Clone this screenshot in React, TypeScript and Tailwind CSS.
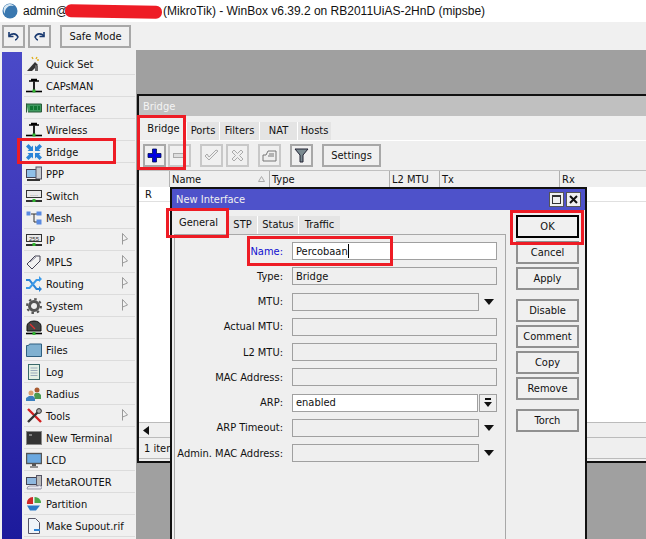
import React from 'react'

const FONT = { fontFamily: '"DejaVu Sans Condensed", "Liberation Sans", Tahoma, sans-serif' }

type MenuItem = { label: string; icon: React.ReactNode; more?: boolean }

const Antenna = () => (
  <svg width="16" height="16" viewBox="0 0 16 16">
    <path d="M3 3h10M5 1.500h6" stroke="#000" strokeWidth="1.400" />
    <path d="M8 3v9" stroke="#222" strokeWidth="2" />
    <path d="M0 13.500h16" stroke="#000" strokeWidth="1.600" />
    <rect x="6.500" y="11.500" width="3" height="3" fill="#2fb52f" />
  </svg>
)

const NetBox = ({ text }: { text: string }) => (
  <svg width="16" height="16" viewBox="0 0 16 16">
    <rect x="0.500" y="2.500" width="15" height="7" fill="#e8e8e8" stroke="#333" />
    <text x="8" y="8.500" fontSize="6" textAnchor="middle" fill="#333" fontFamily="Liberation Sans">{text}</text>
    <path d="M0 13h16" stroke="#000" strokeWidth="1.600" />
    <rect x="6.500" y="11" width="3" height="3" fill="#2fb52f" />
  </svg>
)

const menu: MenuItem[] = [
  {
    label: 'Quick Set',
    icon: (
      <svg width="16" height="16" viewBox="0 0 16 16">
        <path d="M1 15 L9 6 L12 9 L6 15Z" fill="#333" />
        <path d="M9 15V9l3 1v5z" fill="#666" />
        <path d="M6 1l1 2M11 1l-1 2M13 4h-2" stroke="#e0b020" strokeWidth="1.400" />
      </svg>
    ),
  },
  { label: 'CAPsMAN', icon: <Antenna /> },
  {
    label: 'Interfaces',
    icon: (
      <svg width="16" height="16" viewBox="0 0 16 16">
        <path d="M0.500 3.500v9M0.500 4h15v8H2" fill="#3f9a5f" stroke="#2a5a3a" />
        <rect x="4" y="6" width="3" height="4" fill="#173" />
        <rect x="8" y="6" width="3" height="4" fill="#173" />
        <rect x="12" y="6" width="2" height="4" fill="#173" />
      </svg>
    ),
  },
  { label: 'Wireless', icon: <Antenna /> },
  {
    label: 'Bridge',
    icon: (
      <svg width="16" height="16" viewBox="0 0 16 16">
        <path d="M7 7H1.500L3 5.500 0 2.500 2.500 0l3 3L7 1.500z" fill="#2a84d8" />
        <path d="M9 7h5.500L13 5.500l3-3L13.500 0l-3 3L9 1.500z" fill="#2a84d8" />
        <path d="M7 9H1.500L3 10.500l-3 3L2.500 16l3-3L7 14.500z" fill="#2a84d8" />
        <path d="M9 9h5.500L13 10.500l3 3-2.500 2.500-3-3L9 14.500z" fill="#2a84d8" />
      </svg>
    ),
  },
  {
    label: 'PPP',
    icon: (
      <svg width="16" height="16" viewBox="0 0 16 16">
        <rect x="0.500" y="3.500" width="10" height="8" fill="#8fc0e8" stroke="#445" />
        <rect x="10" y="1" width="5.500" height="12" fill="#c8ccd0" stroke="#556" />
        <path d="M1 14h13" stroke="#333" strokeWidth="2" />
      </svg>
    ),
  },
  { label: 'Switch', icon: <NetBox text="····" /> },
  {
    label: 'Mesh',
    icon: (
      <svg width="16" height="16" viewBox="0 0 16 16">
        <path d="M5 4h6M8 4v8h3" stroke="#333" fill="none" />
        <rect x="0.500" y="1.500" width="4" height="4" fill="#5a8ae0" />
        <rect x="10.500" y="1.500" width="5" height="4" fill="#5a8ae0" />
        <rect x="10.500" y="9.500" width="5" height="5" fill="#5a8ae0" />
      </svg>
    ),
  },
  { label: 'IP', icon: <NetBox text="255" />, more: true },
  {
    label: 'MPLS',
    more: true,
    icon: (
      <svg width="16" height="16" viewBox="0 0 16 16">
        <path d="M1 10 9 2h5v5l-8 8z" fill="#f2f2f2" stroke="#445" />
        <path d="M4 8l6-5" stroke="#889" />
      </svg>
    ),
  },
  {
    label: 'Routing',
    more: true,
    icon: (
      <svg width="16" height="16" viewBox="0 0 16 16">
        <path d="M0 3h4l7 9h2v-2l3 3-3 3v-2h-3L3 5H0z" fill="#2a84d8" />
        <path d="M0 11h3l7-8h3V0l3 3-3 3V5h-2L4 13H0z" fill="#3b9ae8" />
      </svg>
    ),
  },
  {
    label: 'System',
    more: true,
    icon: (
      <svg width="16" height="16" viewBox="0 0 16 16">
        <circle cx="8" cy="8" r="4.500" fill="none" stroke="#555" strokeWidth="3" />
        <circle cx="8" cy="8" r="7" fill="none" stroke="#555" strokeWidth="2" strokeDasharray="2.500 3" />
      </svg>
    ),
  },
  {
    label: 'Queues',
    icon: (
      <svg width="16" height="16" viewBox="0 0 16 16">
        <path d="M1 11V6a7 5 0 0 1 14 0v5z" fill="#444" stroke="#111" />
        <path d="M4 4l5 5" stroke="#e03030" strokeWidth="1.200" />
        <path d="M0 13.500h16" stroke="#000" strokeWidth="1.600" />
        <rect x="6.500" y="12" width="3" height="3" fill="#2fb52f" />
      </svg>
    ),
  },
  {
    label: 'Files',
    icon: (
      <svg width="16" height="16" viewBox="0 0 16 16">
        <path d="M0.500 14.500V3.500h2l1-1.500h12v12.500z" fill="#7fb0d0" stroke="#2f5f80" />
      </svg>
    ),
  },
  {
    label: 'Log',
    icon: (
      <svg width="16" height="16" viewBox="0 0 16 16">
        <rect x="2.500" y="0.500" width="11" height="15" fill="#e4f0e4" stroke="#3a6a6a" />
        <path d="M4.500 4h7M4.500 6.500h7M4.500 9h7M4.500 11.500h7" stroke="#9ab" />
      </svg>
    ),
  },
  {
    label: 'Radius',
    icon: (
      <svg width="16" height="16" viewBox="0 0 16 16">
        <circle cx="5" cy="7" r="2.500" fill="#d8a070" />
        <circle cx="11" cy="4" r="2.500" fill="#a85a30" />
        <path d="M0 15v-3l3-2h4l2 2v3z" fill="#3a80c0" />
        <path d="M8 9l1-2h4l2 2v4H9z" fill="#4a9a50" />
      </svg>
    ),
  },
  {
    label: 'Tools',
    more: true,
    icon: (
      <svg width="16" height="16" viewBox="0 0 16 16">
        <path d="M2 1l13 13" stroke="#d02020" strokeWidth="2.400" />
        <path d="M14 2L2 14" stroke="#333" strokeWidth="2.400" />
        <circle cx="13" cy="3" r="2.400" fill="#aaa" stroke="#333" />
      </svg>
    ),
  },
  {
    label: 'New Terminal',
    icon: (
      <svg width="16" height="16" viewBox="0 0 16 16">
        <rect x="0.500" y="1.500" width="15" height="13" fill="#333" stroke="#888" />
        <path d="M3 5h3" stroke="#ccc" />
      </svg>
    ),
  },
  {
    label: 'LCD',
    icon: (
      <svg width="16" height="16" viewBox="0 0 16 16">
        <rect x="0.500" y="1.500" width="15" height="10" fill="#6aa8e0" stroke="#555" strokeWidth="1.400" />
        <path d="M6 12h4v2H6z" fill="#555" />
        <path d="M4 15h8" stroke="#333" />
      </svg>
    ),
  },
  {
    label: 'MetaROUTER',
    icon: (
      <svg width="16" height="16" viewBox="0 0 16 16">
        <rect x="0.500" y="3.500" width="10" height="7" fill="#8fb8e0" stroke="#445" />
        <rect x="10.500" y="1.500" width="5" height="10" fill="#bbb" stroke="#556" />
        <path d="M1 15a3 3 0 0 1 3-3h8a2 2 0 0 1 3 3z" fill="#e8e8f0" stroke="#99a" />
      </svg>
    ),
  },
  {
    label: 'Partition',
    icon: (
      <svg width="16" height="16" viewBox="0 0 16 16">
        <path d="M7 1a6 6 0 0 0-6 7h6z" fill="#d02828" />
        <path d="M8.500 1v6H15a6 6 0 0 0-6.500-6z" fill="#4aa84a" />
        <path d="M1 9.500h13l-4 5H4z" fill="#2a7ac8" />
      </svg>
    ),
  },
  {
    label: 'Make Supout.rif',
    icon: (
      <svg width="16" height="16" viewBox="0 0 16 16">
        <path d="M2.500 0.500h7l4 4v11h-11z" fill="#eef4fa" stroke="#556" />
        <path d="M8 12h6" stroke="#2a84d8" strokeWidth="2" />
      </svg>
    ),
  },
]

const Box = ({ className = '', children }: { className?: string; children?: React.ReactNode }) => (
  <div className={`flex items-center justify-center border-2 bg-[#f0f0f0] ${className}`}>{children}</div>
)

const Tab = ({ label, active, className = '' }: { label: string; active?: boolean; className?: string }) => (
  <div
    className={`flex justify-center ${
      active ? 'h-[24px] bg-[#efefef] pt-[7px]' : 'h-[18px] mt-[6px] bg-[#e4e4e4] pt-[3px] border-l border-white'
    } ${className}`}
  >
    {label}
  </div>
)

const fields = [
  { label: 'Name:', value: 'Percobaan', white: true, cursor: true, blue: true },
  { label: 'Type:', value: 'Bridge' },
  { label: 'MTU:', arrow: true, short: true },
  { label: 'Actual MTU:' },
  { label: 'L2 MTU:' },
  { label: 'MAC Address:' },
  { label: 'ARP:', value: 'enabled', white: true, drop: true },
  { label: 'ARP Timeout:', arrow: true, short: true },
  { label: 'Admin. MAC Address:', arrow: true, short: true },
] as { label: string; value?: string; white?: boolean; cursor?: boolean; blue?: boolean; arrow?: boolean; short?: boolean; drop?: boolean }[]

const sideButtons = [
  { label: 'Cancel', mt: 'mt-[3px]' },
  { label: 'Apply', mt: 'mt-[3px]' },
  { label: 'Disable', mt: 'mt-[9px]' },
  { label: 'Comment', mt: 'mt-[3px]' },
  { label: 'Copy', mt: 'mt-[3px]' },
  { label: 'Remove', mt: 'mt-[3px]' },
  { label: 'Torch', mt: 'mt-[9px]' },
]

const App = () => {
  return (
    <div style={FONT} className="relative w-[646px] h-[539px] overflow-hidden bg-white text-[11px] leading-none text-[#111]">
      {/* title bar */}
      <div className="h-[22px] flex items-center pl-[2px] gap-[5px] text-[12px] font-['Liberation_Sans']">
        <svg width="16" height="16" viewBox="0 0 16 16">
          <circle cx="8" cy="8" r="7.500" fill="#3a78b0" />
          <path d="M3 11a6 6 0 0 1 9-8 7 7 0 0 0-9 8z" fill="#d8e8f4" />
        </svg>
        <span className="w-[135px] shrink-0">admin@</span>
        <span className="whitespace-nowrap">(MikroTik) - WinBox v6.39.2 on RB2011UiAS-2HnD (mipsbe)</span>
      </div>

      {/* toolbar */}
      <div className="h-[28px] flex items-center bg-[#f0f0f0] pl-[2px]">
        <Box className="w-[23px] h-[23px] border-[#a8a8a8]">
          <svg width="13" height="13" viewBox="0 0 13 13" fill="none" stroke="#1a3a70" strokeWidth="1.600">
            <path d="M2 6c3-3 7-3 9 1-1 2-2 3-3 3" />
            <path d="M2 2v4.500h4.500" />
          </svg>
        </Box>
        <Box className="w-[23px] h-[23px] ml-[3px] border-[#a8a8a8]">
          <svg width="13" height="13" viewBox="0 0 13 13" fill="none" stroke="#1a3a70" strokeWidth="1.600">
            <path d="M11 6C8 3 4 3 2 7c1 2 2 3 3 3" />
            <path d="M11 2v4.500H6.500" />
          </svg>
        </Box>
        <Box className="w-[71px] h-[23px] ml-[9px] border-[#a8a8a8]">Safe Mode</Box>
      </div>

      {/* main area */}
      <div className="relative flex h-[489px] bg-[#f0f0f0]">
        <div className="ml-[2px] mt-[2px] w-[20px] bg-gradient-to-b from-[#4a4ac8] via-[#3a30b4] to-[#1c1a9c]" />
        <div className="w-[113px] pl-[2px] pt-[3px]">
          {menu.map(m => (
            <div key={m.label} className="relative h-[22px] flex items-center pl-[2px] gap-[4px] border-b border-[#dcdcdc]">
              <span className="shrink-0 w-[16px] h-[16px] flex">{m.icon}</span>
              <span className="whitespace-nowrap pt-px">{m.label}</span>
              {m.more && (
                <svg className="ml-auto mr-[7px] mb-[2px]" width="6" height="12" viewBox="0 0 6 12">
                  <path d="M.5 .5v11M.5 .5 5.500 6 .5 8" fill="#f4f4f4" stroke="#999" />
                </svg>
              )}
            </div>
          ))}
        </div>
        <div className="w-px bg-[#a0a0a0] ml-[1px]" />
        <div className="relative flex-1 bg-[#a0a0a0]">
          {/* Bridge window */}
          <div className="absolute left-0 top-[44px] w-[509px] h-[369px] border-2 border-[#111] border-r-0 bg-[#efefef] flex flex-col">
            <div className="h-[20px] shrink-0 bg-[#c0c0c0] text-[#f4f4f4] flex items-center pl-[4px]">Bridge</div>
            <div className="flex h-[24px] shrink-0 pl-[2px]">
              <Tab label="Bridge" active className="w-[45px]" />
              <Tab label="Ports" className="w-[33px]" />
              <Tab label="Filters" className="w-[40px]" />
              <Tab label="NAT" className="w-[38px]" />
              <Tab label="Hosts" className="w-[34px]" />
            </div>
            <div className="h-[30px] shrink-0 flex items-center pl-[4px] gap-[2px] border-t border-white">
              <Box className="w-[23px] h-[23px] border-[#a8a8a8]">
                <svg width="15" height="15" viewBox="0 0 15 15"><path d="M5.500 1h4v4.500H14v4H9.500V14h-4V9.500H1v-4h4.500z" fill="#0000e0" stroke="#001050" strokeWidth=".8" /></svg>
              </Box>
              <Box className="w-[23px] h-[23px] border-[#c8c8c8]">
                <span className="w-[13px] h-[5px] border border-[#aaa] bg-[#ddd]" />
              </Box>
              <Box className="w-[23px] h-[23px] ml-[7px] border-[#c8c8c8]">
                <svg width="15" height="13" viewBox="0 0 15 13"><path d="M1 7l4 4 9-9-2-1-7 7-2-3z" fill="#eee" stroke="#aaa" /></svg>
              </Box>
              <Box className="w-[23px] h-[23px] ml-px border-[#c8c8c8]">
                <svg width="13" height="13" viewBox="0 0 13 13"><path d="M1 3l2-2 3.500 3.500L10 1l2 2-3.500 3.500L12 10l-2 2-3.500-3.500L3 12l-2-2 3.500-3.500z" fill="#eee" stroke="#aaa" /></svg>
              </Box>
              <Box className="w-[23px] h-[23px] ml-[7px] border-[#c8c8c8]">
                <svg width="15" height="12" viewBox="0 0 15 12"><path d="M1 11V5h3l2-4h8v10z" fill="#eee" stroke="#777" /><path d="M7 4h5M6 6h6" stroke="#777" /></svg>
              </Box>
              <Box className="w-[23px] h-[23px] ml-[7px] border-[#a8a8a8]">
                <svg width="15" height="15" viewBox="0 0 15 15"><path d="M1 1h13L9 7v7H6V7z" fill="#7a8a90" stroke="#223" /></svg>
              </Box>
              <Box className="w-[59px] h-[23px] ml-[7px] border-[#a8a8a8]">Settings</Box>
            </div>
            <div className="h-[17px] shrink-0 flex border-t border-[#c0c0c0]">
              <div className="w-[31px] border-r border-[#b0b0b0]" />
              <div className="w-[100px] border-r border-[#b0b0b0] pl-[2px] flex items-center justify-between pr-[4px]">
                Name
                <svg width="7" height="6" viewBox="0 0 7 6"><path d="M3.500 .5 6.500 5.500h-6z" fill="#eee" stroke="#aaa" /></svg>
              </div>
              <div className="w-[120px] border-r border-[#b0b0b0] pl-[2px] flex items-center">Type</div>
              <div className="w-[50px] border-r border-[#b0b0b0] pl-[2px] flex items-center">L2 MTU</div>
              <div className="w-[120px] border-r border-[#b0b0b0] pl-[2px] flex items-center">Tx</div>
              <div className="flex-1 pl-[2px] flex items-center">Rx</div>
            </div>
            <div className="flex-1 bg-white">
              <div className="h-[15px] pl-[6px] flex items-center border-b border-[#e0e0e0]">R</div>
            </div>
            <div className="h-[15px] shrink-0 flex items-center pl-[3px] border-t border-[#bbb]">
              <svg width="9" height="9" viewBox="0 0 9 9"><path d="M7 0v9L1 4.500z" fill="#111" /></svg>
            </div>
            <div className="h-[21px] shrink-0 flex items-center pl-[5px] border-t border-[#bbb]">1 item</div>
            <div className="h-[3px] shrink-0 border-t border-[#bbb]" />
          </div>

          {/* New Interface dialog */}
          <div className="absolute left-[33px] top-[137px] w-[417px] h-[352px] border-2 border-[#111] border-b-0 bg-[#efefef] flex flex-col">
            <div className="h-[21px] shrink-0 bg-[#4e52ca] text-[#f0f0f0] flex items-center pl-[4px]">
              New Interface
              <div className="ml-auto flex gap-[2px] pr-[4px]">
                <div className="w-[15px] h-[15px] bg-[#f0f0f0] border border-[#555] flex items-center justify-center">
                  <span className="w-[9px] h-[9px] border border-[#333] border-t-2" />
                </div>
                <div className="w-[15px] h-[15px] bg-[#f0f0f0] border border-[#555] flex items-center justify-center">
                  <svg width="9" height="9" viewBox="0 0 9 9"><path d="M1 1l7 7M8 1L1 8" stroke="#111" strokeWidth="2" /></svg>
                </div>
              </div>
            </div>
            <div className="flex flex-1">
              <div className="w-[334px] flex flex-col">
                <div className="flex h-[24px] shrink-0">
                  <Tab label="General" active className="w-[53px]" />
                  <Tab label="STP" className="w-[30px] ml-[2px]" />
                  <Tab label="Status" className="w-[41px]" />
                  <Tab label="Traffic" className="w-[42px]" />
                </div>
                <div className="flex-1 ml-[2px] border-l border-r border-t border-[#a8a8a8] pt-[7px] flex flex-col gap-[7.25px]">
                  {fields.map(f => (
                    <div key={f.label} className="flex items-center h-[18px]">
                      <div className={`w-[117px] shrink-0 text-right pr-[9px] whitespace-nowrap ${f.blue ? 'text-[#1010d0]' : ''}`}>{f.label}</div>
                      <div
                        className={`h-[18px] border border-[#a0a0a0] pl-[3px] flex items-center ${
                          f.drop ? 'w-[186px]' : f.short ? 'w-[187px]' : 'w-[205px]'
                        } ${f.white ? 'bg-white' : 'bg-[#efefef]'}`}
                      >
                        {f.value}
                        {f.cursor && <span className="w-px h-[14px] bg-black" />}
                      </div>
                      {f.arrow && (
                        <svg className="ml-[5px]" width="10" height="6" viewBox="0 0 10 6"><path d="M0 0h10L5 6z" fill="#111" /></svg>
                      )}
                      {f.drop && (
                        <div className="ml-px w-[18px] h-[18px] border border-[#a0a0a0] flex items-center justify-center">
                          <svg width="8" height="9" viewBox="0 0 8 9"><path d="M0 4h8L4 9zM1 0h6v2H1z" fill="#111" /></svg>
                        </div>
                      )}
                    </div>
                  ))}
                </div>
              </div>
              <div className="flex-1 pl-[10px] pt-[5px] flex flex-col">
                <div className="w-[63px] h-[23px] border-2 border-black flex items-center justify-center bg-[#f0f0f0]">OK</div>
                {sideButtons.map(b => (
                  <div key={b.label} className={`${b.mt} w-[63px] h-[23px] border-2 border-[#909090] flex items-center justify-center bg-[#f0f0f0]`}>
                    {b.label}
                  </div>
                ))}
              </div>
            </div>
          </div>
        </div>
      </div>

      {/* annotations drawn on top of the screenshot */}
      <div className="absolute left-[65px] top-[5px] w-[97px] h-[13px] rounded-[6px] bg-[#ee1c25] rotate-[1deg]" />
      <div className="absolute left-[17px] top-[138px] w-[99px] h-[26px] border-[3px] border-[#ee1c25]" />
      <div className="absolute left-[137px] top-[115px] w-[49px] h-[55px] border-[3px] border-[#ee1c25]" />
      <div className="absolute left-[166px] top-[208px] w-[63px] h-[30px] border-[3px] border-[#ee1c25]" />
      <div className="absolute left-[247px] top-[236px] w-[146px] h-[30px] border-[3px] border-[#ee1c25]" />
      <div className="absolute left-[510px] top-[210px] w-[74px] h-[35px] border-[3px] border-[#ee1c25]" />
    </div>
  )
}

export default App
